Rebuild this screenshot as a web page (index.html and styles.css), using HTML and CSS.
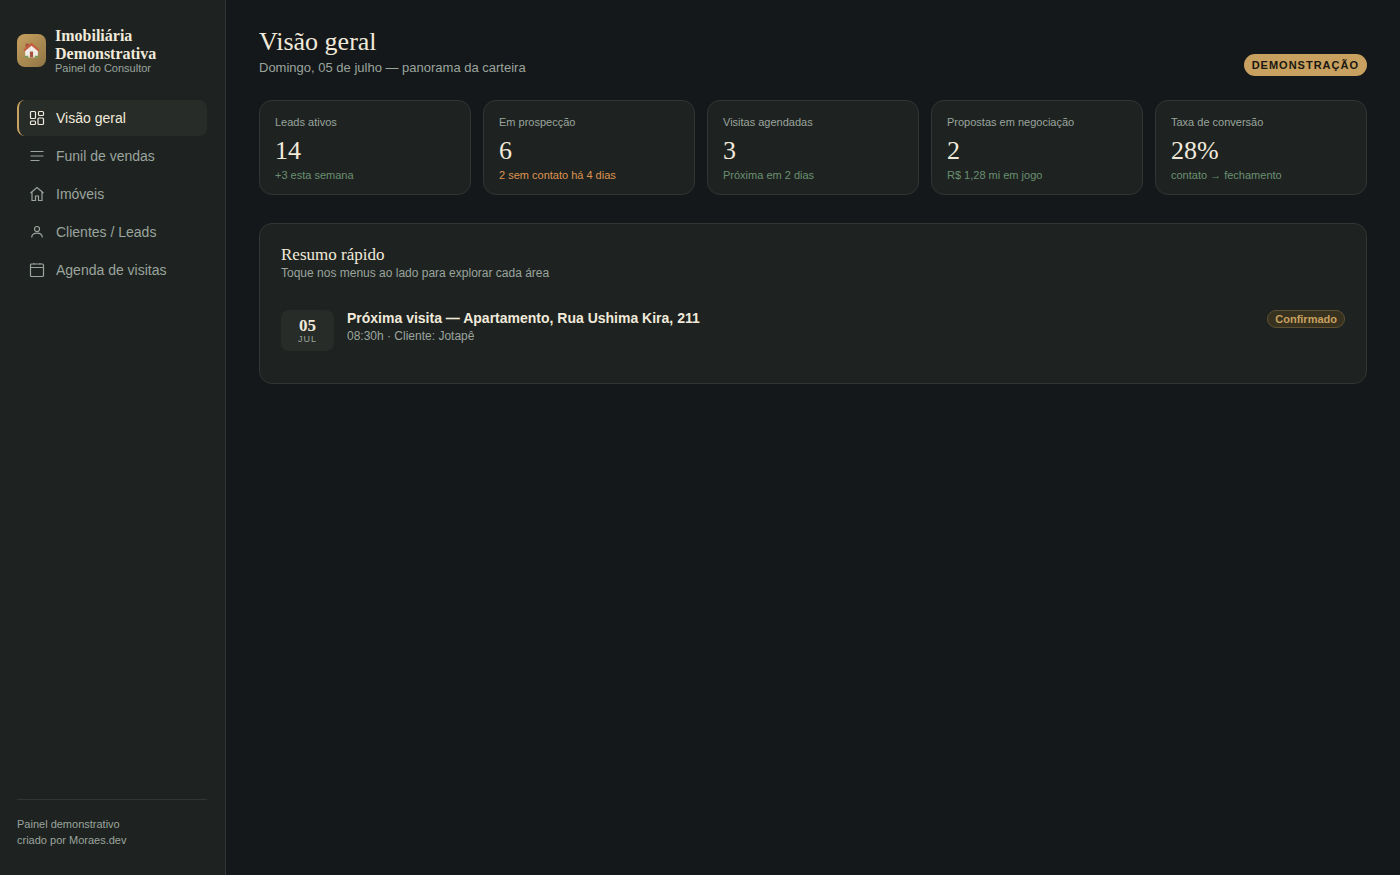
FILE: index.html
```html
<!DOCTYPE html>
<html lang="pt-BR">
<head>
<meta charset="utf-8">
<meta name="viewport" content="width=device-width, initial-scale=1">
<title>Imobiliária Demonstrativa — Painel do Consultor</title>
<link rel="stylesheet" href="styles.css">
</head>
<body>
<div class="app">
  <aside class="sidebar">
    <div class="brand">
      <span class="brand-mark">
        <svg width="17" height="17" viewBox="0 0 32 32" aria-hidden="true">
          <path fill="#a8503a" d="M5 3h6v9H5z"/>
          <path fill="#f1ede6" d="M4 15 16 5l12 10v14H4z"/>
          <path fill="#c4603f" d="M16 1 1 14l2 4L16 7l13 11 2-4z"/>
          <path fill="#a5533d" d="M13 18h6v11h-6z"/>
          <path fill="#7d9a5b" d="M3 26h7v4H3zM22 26h7v4h-7z"/>
        </svg>
      </span>
      <div>
        <div class="brand-name">Imobiliária Demonstrativa</div>
        <div class="brand-sub">Painel do Consultor</div>
      </div>
    </div>
    <nav class="nav">
      <button class="nav-item active" type="button">
        <svg class="icon" viewBox="0 0 16 16" aria-hidden="true"><rect x="1.500" y="1.500" width="5" height="7" rx="1"/><rect x="9.500" y="1.500" width="5" height="4" rx="1"/><rect x="9" y="8" width="5.500" height="6.500" rx="1"/><rect x="1.500" y="11" width="5" height="3.500" rx="1"/></svg>
        Visão geral
      </button>
      <button class="nav-item" type="button">
        <svg class="icon" viewBox="0 0 16 16" aria-hidden="true"><path d="M1.500 3.500h13M1.500 8h13M1.500 12.500h9"/></svg>
        Funil de vendas
      </button>
      <button class="nav-item" type="button">
        <svg class="icon" viewBox="0 0 16 16" aria-hidden="true"><path d="M1.500 7 8 1.500 14.500 7M3 6v8.500h3.500V10h3v4.500H13V6"/></svg>
        Imóveis
      </button>
      <button class="nav-item" type="button">
        <svg class="icon" viewBox="0 0 16 16" aria-hidden="true"><circle cx="8" cy="5" r="2.500"/><path d="M2.700 13.500c0-3 2.300-4.300 5.300-4.300s5.300 1.300 5.300 4.300"/></svg>
        Clientes / Leads
      </button>
      <button class="nav-item" type="button">
        <svg class="icon" viewBox="0 0 16 16" aria-hidden="true"><rect x="1.500" y="2" width="13" height="12.500" rx="1"/><path d="M1.500 5.500h13M5 1v1.500M11 1v1.500"/></svg>
        Agenda de visitas
      </button>
    </nav>
    <footer class="side-foot">Painel demonstrativo<br>criado por Moraes.dev</footer>
  </aside>

  <main class="main">
    <header class="topbar">
      <div>
        <h1>Visão geral</h1>
        <p class="subtitle">Domingo, 05 de julho — panorama da carteira</p>
      </div>
      <span class="demo-badge">DEMONSTRAÇÃO</span>
    </header>

    <section class="kpis" aria-label="Indicadores">
      <article class="kpi"><div class="kpi-label">Leads ativos</div><div class="kpi-value">14</div><div class="kpi-note">+3 esta semana</div></article>
      <article class="kpi"><div class="kpi-label">Em prospecção</div><div class="kpi-value">6</div><div class="kpi-note warn">2 sem contato há 4 dias</div></article>
      <article class="kpi"><div class="kpi-label">Visitas agendadas</div><div class="kpi-value">3</div><div class="kpi-note">Próxima em 2 dias</div></article>
      <article class="kpi"><div class="kpi-label">Propostas em negociação</div><div class="kpi-value">2</div><div class="kpi-note">R$ 1,28 mi em jogo</div></article>
      <article class="kpi"><div class="kpi-label">Taxa de conversão</div><div class="kpi-value">28%</div><div class="kpi-note">contato → fechamento</div></article>
    </section>

    <section class="panel">
      <h2>Resumo rápido</h2>
      <p class="panel-sub">Toque nos menus ao lado para explorar cada área</p>
      <div class="visit">
        <div class="date"><div class="date-day">05</div><div class="date-month">JUL</div></div>
        <div class="visit-info">
          <div class="visit-title">Próxima visita — Apartamento, Rua Ushima Kira, 211</div>
          <div class="visit-meta">08:30h · Cliente: Jotapê</div>
        </div>
        <span class="status">Confirmado</span>
      </div>
    </section>
  </main>
</div>
</body>
</html>
```
FILE: styles.css
```css
:root {
  --bg: #14181a;
  --surface: #1e2321;
  --raised: #272c29;
  --line: #313633;
  --text: #f1eadb;
  --muted: #9ba49d;
  --gold: #c8a05f;
  --green: #6b8f71;
  --orange: #de9350;
  --serif: "Liberation Serif", "Times New Roman", serif;
  --sans: "Liberation Sans", Arial, sans-serif;
}

* { box-sizing: border-box; }

body {
  margin: 0;
  background: var(--bg);
  color: var(--text);
  font-family: var(--sans);
}

h1, h2, p { margin: 0; font-weight: 400; }

.app { display: flex; min-height: 100vh; }

.sidebar {
  display: flex;
  flex-direction: column;
  flex: 0 0 226px;
  padding: 27px 18px 27px 17px;
  background: var(--surface);
  border-right: 1px solid var(--line);
}

.brand { display: flex; align-items: center; gap: 9px; margin-bottom: 26px; }

.brand-mark {
  display: flex;
  align-items: center;
  justify-content: center;
  flex: 0 0 29px;
  height: 33px;
  border-radius: 8px;
  background: linear-gradient(135deg, #c8a05f, #8f7646);
}

.brand-name { font: 700 16px/18px var(--serif); }
.brand-sub { font-size: 11px; line-height: 11px; color: var(--muted); }

.nav { display: flex; flex-direction: column; gap: 2px; }

.nav-item {
  display: flex;
  align-items: center;
  gap: 11px;
  height: 36px;
  padding: 0 10px;
  border: 0;
  border-left: 2px solid transparent;
  border-radius: 8px;
  background: none;
  color: var(--muted);
  font: 14px/20px var(--sans);
  text-align: left;
  cursor: pointer;
}

.nav-item.active {
  background: var(--raised);
  border-left-color: var(--gold);
  color: var(--text);
}

.icon {
  width: 16px;
  height: 16px;
  fill: none;
  stroke: currentColor;
  stroke-width: 1.2;
}

.side-foot {
  margin-top: auto;
  padding-top: 16px;
  border-top: 1px solid var(--line);
  font-size: 11px;
  line-height: 16px;
  color: var(--muted);
}

.main { flex: 1; min-width: 0; padding: 27px 33px; }

.topbar {
  display: flex;
  align-items: flex-end;
  justify-content: space-between;
  margin-bottom: 24px;
}

h1 { font: 400 26px/30px var(--serif); }
.subtitle { margin-top: 3px; font-size: 13px; line-height: 16px; color: var(--muted); }

.demo-badge {
  padding: 4px 8px;
  border-radius: 11px;
  background: var(--gold);
  color: #1a1710;
  font-size: 11px;
  font-weight: 700;
  line-height: 14px;
  letter-spacing: 1px;
}

.kpis {
  display: grid;
  grid-template-columns: repeat(5, 1fr);
  gap: 12px;
  margin-bottom: 28px;
}

.kpi {
  padding: 14px 15px 12px;
  background: var(--surface);
  border: 1px solid var(--line);
  border-radius: 13px;
}

.kpi-label, .kpi-note { font-size: 11px; line-height: 14px; }
.kpi-label { color: var(--muted); }
.kpi-value { margin: 7px 0 2px; font: 400 26px/30px var(--serif); }
.kpi-note { color: var(--green); }
.kpi-note.warn { color: var(--orange); }

.panel {
  padding: 21px;
  background: var(--surface);
  border: 1px solid var(--line);
  border-radius: 13px;
}

h2 { font: 400 17px/20px var(--serif); }
.panel-sub { font-size: 12px; line-height: 16px; color: var(--muted); }

.visit {
  display: flex;
  align-items: flex-start;
  gap: 13px;
  margin-top: 17px;
  padding: 12px 0 11px;
}

.date {
  width: 53px;
  padding: 7px 0;
  border-radius: 8px;
  background: var(--raised);
  text-align: center;
}

.date-day { font: 700 17px/17px var(--serif); }
.date-month { font-size: 9px; line-height: 10px; letter-spacing: 1px; color: var(--muted); }

.visit-info { flex: 1; }
.visit-title { font-size: 14px; font-weight: 700; line-height: 16px; }
.visit-meta { margin-top: 2px; font-size: 12px; line-height: 16px; color: var(--muted); }

.status {
  padding: 1px 7px;
  border: 1px solid #5e5034;
  border-radius: 9px;
  background: #37321f;
  color: var(--gold);
  font-size: 11px;
  font-weight: 700;
  line-height: 14px;
}
```
